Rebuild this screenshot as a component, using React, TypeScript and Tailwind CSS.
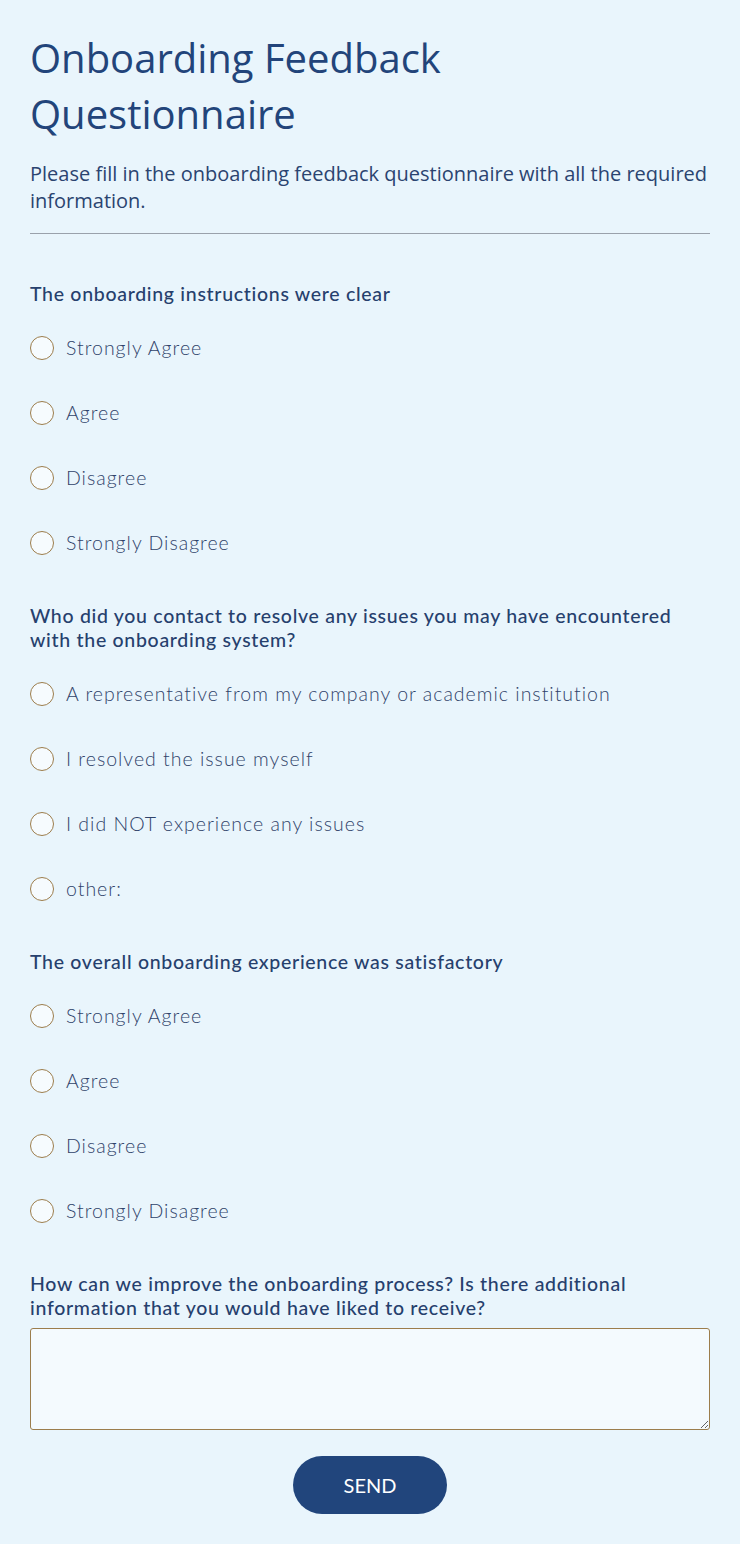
import React from "react";

const agreeScale = ["Strongly Agree", "Agree", "Disagree", "Strongly Disagree"];

const questions = [
  { label: "The onboarding instructions were clear", options: agreeScale },
  {
    label:
      "Who did you contact to resolve any issues you may have encountered with the onboarding system?",
    options: [
      "A representative from my company or academic institution",
      "I resolved the issue myself",
      "I did NOT experience any issues",
      "other:",
    ],
  },
  { label: "The overall onboarding experience was satisfactory", options: agreeScale },
];

const labelFont = { fontFamily: "Lato, 'Noto Sans', sans-serif" };

const RadioRow = ({ name, text }: { name: string; text: string }) => (
  <label className="flex h-[65px] cursor-pointer items-center gap-3">
    <input type="radio" name={name} className="peer sr-only" />
    <span className="h-6 w-6 shrink-0 rounded-full border border-[#9c7d4c] bg-[#f6fbfe]" />
    <span className="text-[19.5px] font-light tracking-[1px] text-[#30436a]">{text}</span>
  </label>
);

export default function App() {
  return (
    <div className="min-h-screen bg-[#e9f5fc]">
      <form className="px-[30px] pt-[30px] pb-[30px]" style={labelFont}>
        <h1
          className="text-[40px] leading-[56px] text-[#22447a]"
          style={{ fontFamily: "'Open Sans', sans-serif" }}
        >
          Onboarding Feedback
          <br />
          Questionnaire
        </h1>
        <p
          className="mt-[18px] text-[20px] leading-[27px] text-[#2b4470]"
          style={{ fontFamily: "'Open Sans', sans-serif" }}
        >
          Please fill in the onboarding feedback questionnaire with all the required information.
        </p>
        <hr className="mt-[19px] border-t border-[#9aa1ab]" />

        <div className="mt-[48px] flex flex-col gap-[29px]">
          {questions.map((q, i) => (
            <div key={i}>
              <p className="pr-6 text-[19.5px] font-medium leading-6 tracking-[0.7px] text-[#26406d]">
                {q.label}
              </p>
              <div className="mt-[9px] flex flex-col">
                {q.options.map((o) => (
                  <RadioRow key={o} name={`q${i}`} text={o} />
                ))}
              </div>
            </div>
          ))}

          <div>
            <p className="pr-6 text-[19.5px] font-medium leading-6 tracking-[0.7px] text-[#26406d]">
              How can we improve the onboarding process? Is there additional information that you
              would have liked to receive?
            </p>
            <textarea className="mt-2 block h-[102px] w-full rounded-[3px] border border-[#9c7d4c] bg-[#f4fafe] p-2 outline-none" />
          </div>
        </div>

        <div className="mt-[26px] flex justify-center">
          <button
            type="button"
            className="h-[58px] w-[154px] rounded-full bg-[#21457c] text-[20px] text-white"
          >
            SEND
          </button>
        </div>
      </form>
    </div>
  );
}
